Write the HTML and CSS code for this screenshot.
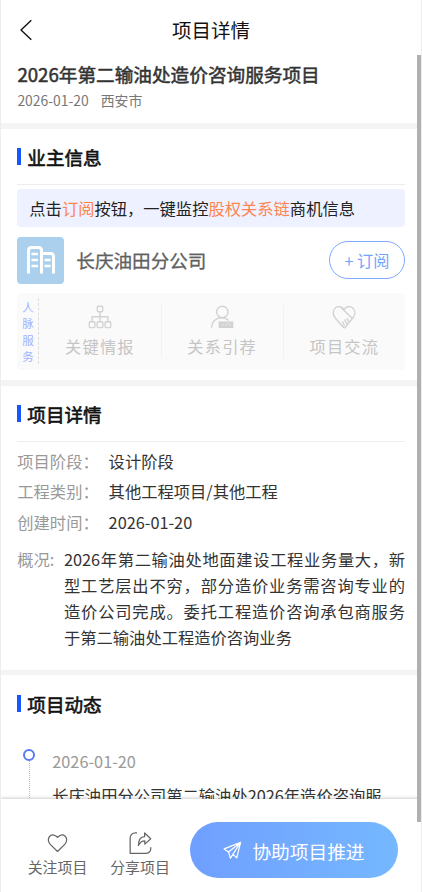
FILE: index.html
```html
<!DOCTYPE html>
<html lang="zh-CN">
<head>
<meta charset="utf-8">
<title>项目详情</title>
<link rel="stylesheet" href="styles.css">
</head>
<body>
<div class="page">
  <header class="navbar">
    <svg class="back" viewBox="0 0 14 22"><path d="M12.3 1.3 2 11l10.3 9.7"/></svg>
    <h1>项目详情</h1>
  </header>
  <main class="content">
    <section class="summary">
      <h2>2026年第二输油处造价咨询服务项目</h2>
      <p><span>2026-01-20</span><span>西安市</span></p>
    </section>

    <section class="owner">
      <h3 class="section-title">业主信息</h3>
      <p class="notice">点击<em>订阅</em>按钮，一键监控<em>股权关系链</em>商机信息</p>
      <div class="company">
        <div class="logo">
          <svg viewBox="0 0 47 47"><path d="M11.5 36.5V13.500q0-3 3-3h7q3 0 3 3v23M24.500 16.500h9q3 0 3 3v17" stroke-width="3"/><path d="M14.500 17h6.500M14.500 23h6.500M14.500 29h6.500M27.500 23h6M27.500 29h6" stroke-width="2.700"/></svg>
        </div>
        <span class="name">长庆油田分公司</span>
        <button class="subscribe">+ 订阅</button>
      </div>
      <div class="services">
        <div class="services-label">人脉服务</div>
        <div class="service">
          <svg viewBox="0 0 24 24"><rect x="9.300" y="1.300" width="5.400" height="5.400" rx="1"/><rect x="1.300" y="16.800" width="5.600" height="5.800" rx="1"/><rect x="9.200" y="16.800" width="5.600" height="5.800" rx="1"/><rect x="17.100" y="16.800" width="5.600" height="5.800" rx="1"/><path d="M12 6.700v10M4.100 16.500v-4.800h15.800v4.800"/></svg>
          <span>关键情报</span>
        </div>
        <div class="service">
          <svg viewBox="0 0 24 24"><circle cx="12.300" cy="7" r="5.700"/><path d="M1.500 22.600c.3-6 4.300-9.800 10-9.800 3 0 5.300 1 7 2.700"/><rect class="solid" x="8.700" y="16.500" width="14.600" height="6.500"/><path class="detail" d="M12 21l1.200-2 1.200 1.500M15.500 18.800h2l-1.500 2.200M18.500 18.800h1.500v2.200"/></svg>
          <span>关系引荐</span>
        </div>
        <div class="service">
          <svg viewBox="0 0 24 24"><path d="M11.500 22.500 3.200 13C.3 9.600.7 5 3.500 2.800 6.200.8 9.800 1.500 12 4.600 14.200 1.500 17.800.8 20.500 2.800c2.800 2.200 3.100 6.200.7 9.700l-7.300 9q-1.200 1.700-2.400 1M9 2.500l11.500 11M10.500 16.500l2 4.500M12.500 14.500l2.300 4.500M14.800 13.500l2 3"/></svg>
          <span>项目交流</span>
        </div>
      </div>
    </section>

    <section class="details">
      <h3 class="section-title">项目详情</h3>
      <dl>
        <div class="row"><dt>项目阶段：</dt><dd>设计阶段</dd></div>
        <div class="row"><dt>工程类别：</dt><dd>其他工程项目/其他工程</dd></div>
        <div class="row"><dt>创建时间：</dt><dd>2026-01-20</dd></div>
        <div class="overview"><dt>概况:</dt><dd>2026年第二输油处地面建设工程业务量大，新型工艺层出不穷，部分造价业务需咨询专业的造价公司完成。委托工程造价咨询承包商服务于第二输油处工程造价咨询业务</dd></div>
      </dl>
    </section>

    <section class="activity">
      <h3 class="section-title">项目动态</h3>
      <div class="event">
        <div class="rail"><i class="dot"></i></div>
        <div class="event-body">
          <time>2026-01-20</time>
          <p>长庆油田分公司第二输油处2026年造价咨询服</p>
        </div>
      </div>
    </section>
  </main>
  <footer class="actions">
    <div class="action follow">
      <svg viewBox="0 0 24 24"><path d="M12 20.800 4.200 13.200C1.700 10.700 2 6.500 4.200 4.700 6.600 2.800 10 3.500 12 6.200 14 3.500 17.400 2.800 19.800 4.700 22 6.500 22.300 10.700 19.800 13.200Z"/></svg>
      <span>关注项目</span>
    </div>
    <div class="action share">
      <svg viewBox="0 0 24 24"><path d="M8.300 1.500H7Q1.200 1.500 1.200 7.300V22.800H18Q22.800 22.800 22.800 16.500M9.800 14.500C9.800 8.500 12 5.500 16.300 5.300V1.500L22.700 7.500 16.500 13.200V9.700C13.300 9.700 11.300 11.300 9.800 14.500Z"/></svg>
      <span>分享项目</span>
    </div>
    <button class="primary">
      <svg viewBox="0 0 20 20"><path d="M18.500 1.500 1.200 8.300l4.600 3.200 2 6.700 2.600-4.100 4.100 3.600ZM18.500 1.500 5.800 11.500M18.500 1.500 10.400 14.100"/></svg>
      <span>协助项目推进</span>
    </button>
  </footer>
  <div class="scrollbar"></div>
</div>
</body>
</html>
```
FILE: styles.css
```css
* { box-sizing: border-box; }
html, body, h1, h2, h3, p, dl, dd { margin: 0; }
body {
  font-family: "Noto Sans CJK SC", sans-serif;
  background: #fff;
  color: #333;
}
svg {
  display: block;
  flex: none;
  fill: none;
  stroke: currentColor;
  stroke-linejoin: round;
}
button { font-family: inherit; padding: 0; }
.page {
  position: relative;
  display: flex;
  flex-direction: column;
  height: 892px;
  overflow: hidden;
  border: solid #ededed;
  border-width: 0 1px;
}
.navbar {
  display: flex;
  align-items: center;
  height: 59px;
  padding: 0 18px;
}
.back { width: 14px; height: 22px; color: #111; stroke-width: 1.4; }
.navbar h1 {
  flex: 1;
  margin: -1px 14px 0 0;
  text-align: center;
  font-size: 19.5px;
  font-weight: 400;
  color: #111;
}
.content { height: 740px; overflow: hidden; flex: none; }
.summary { height: 64px; padding: 0 16.4px; }
.summary h2 {
  font-size: 18.65px;
  line-height: 29px;
  font-weight: 400;
  -webkit-text-stroke: .5px currentColor;
}
.summary p {
  display: flex;
  gap: 12px;
  font-size: 13.9px;
  line-height: 25px;
  color: #777;
}
.owner, .details, .activity { padding: 0 16px 0 16.3px; border-top: 6.500px solid #f4f4f4; }
.owner { height: 257px; }
.details { height: 290px; }
.activity { border-top-width: 5px; }
.section-title {
  display: flex;
  align-items: center;
  gap: 6px;
  height: 56px;
  border-bottom: 1.500px solid #eee;
  font-size: 18.6px;
  font-weight: 400;
  color: #111;
  -webkit-text-stroke: .6px currentColor;
}
.section-title::before { content: ""; width: 4px; height: 17px; background: #1456ff; }
.notice {
  height: 38px;
  margin-top: 4px;
  padding-left: 12px;
  border-radius: 4px;
  background: #eef1ff;
  font-size: 16.3px;
  line-height: 39px;
  color: #222;
}
.notice em { font-style: normal; color: #ff8550; }
.company { display: flex; align-items: center; height: 47px; margin-top: 9.5px; }
.logo { width: 47px; height: 47px; border-radius: 4px; background: #abd0ed; color: #fff; }
.name {
  flex: 1;
  margin: -2px 0 0 12px;
  font-size: 18.6px;
  color: #606060;
  -webkit-text-stroke: .3px currentColor;
}
.subscribe {
  width: 76px;
  height: 38px;
  border: 1.300px solid #7faaff;
  border-radius: 19px;
  background: #fff;
  color: #74a3ff;
  font-size: 16.25px;
}
.services {
  display: flex;
  align-items: center;
  height: 77px;
  margin-top: 9px;
  border-radius: 4px;
  background: #fafafa;
  color: #c5c5c5;
}
.services-label {
  width: 22px;
  height: 66px;
  padding: 1px 0 0 5px;
  border-right: 1px dashed #ddd;
  font-size: 11.500px;
  line-height: 16.300px;
  color: #a0b2ff;
}
.service {
  flex: 1;
  display: flex;
  flex-direction: column;
  align-items: center;
  height: 53px;
}
.service + .service { border-left: 1px solid #f2f2f2; }
.service svg { width: 24px; height: 24px; stroke-width: 1.4; color: #d2d2d2; }
.service .solid { fill: currentColor; stroke: none; }
.service .detail { stroke: #fafafa; stroke-width: .5; }
.service span { margin-top: 5px; font-size: 16.25px; line-height: 24px; letter-spacing: 1.2px; }
.row, .overview { display: flex; font-size: 16.3px; }
.details dl { padding-top: 4px; }
.row { height: 30.300px; line-height: 30.300px; }
.row dt { width: 91.3px; flex: none; color: #999; }
.overview { margin-top: 10.5px; line-height: 25.800px; }
.overview dt { width: 46.7px; flex: none; color: #999; }
.overview dd { text-align: justify; }
.activity .section-title { border-bottom: 0; }
.event { display: flex; padding: 18px 0 0 6px; }
.rail { width: 13px; height: 90px; margin-right: 16px; background: repeating-linear-gradient(#bbb 0 1px, transparent 1px 2px) 6px 0 / 1px 100% no-repeat; }
.dot {
  display: block;
  width: 12px;
  height: 12px;
  border: 2.500px solid #597cf5;
  border-radius: 50%;
  background: #fff;
}
.event-body { white-space: nowrap; font-size: 16.3px; }
.event-body time { display: block; height: 31px; line-height: 25px; color: #999; }
.event-body p { line-height: 30px; }
.actions {
  position: relative;
  flex: 1;
  display: flex;
  align-items: flex-start;
  background: #fff;
  box-shadow: 0 -1px 3px rgba(0, 0, 0, .2);
  color: #666;
}
.action { display: flex; flex-direction: column; align-items: center; width: 82px; padding-top: 32px; }
.follow { margin-left: 15.5px; }
.share { margin-left: .5px; }
.action svg { width: 23px; height: 24px; stroke-width: 1.3; }
.action span { font-size: 14.900px; line-height: 24px; }
.primary {
  display: flex;
  align-items: center;
  justify-content: center;
  gap: 10px;
  width: 208px;
  height: 56px;
  margin: 23px 0 0 9px;
  border: 0;
  border-radius: 28px;
  background: linear-gradient(90deg, #709fff, #75b8ff);
  color: #fff;
  font-size: 18.700px;
}
.primary svg { width: 19px; height: 19px; stroke-width: 1.3; }
.scrollbar {
  position: absolute;
  top: 55px;
  right: 0;
  width: 4px;
  height: 767px;
  background: #b0b0b0;
}
```
